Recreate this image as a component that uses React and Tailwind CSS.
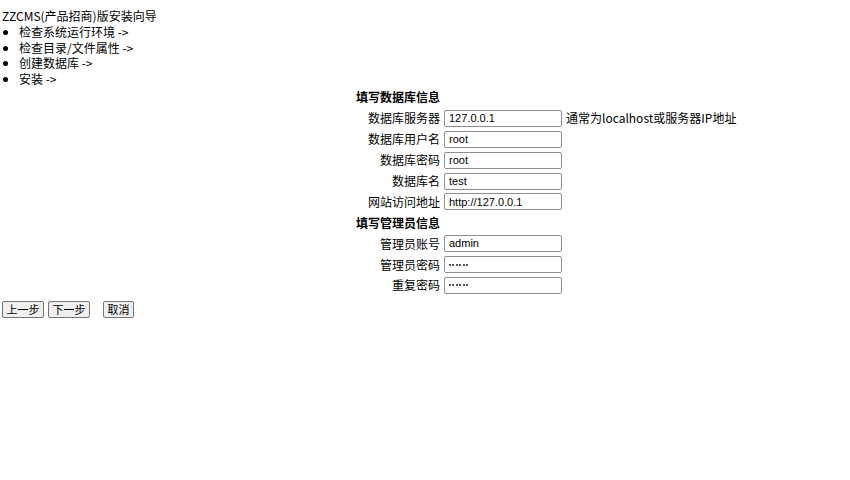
import React from 'react';

const dbRows = [
  { label: '数据库服务器', value: '127.0.0.1', tip: '通常为localhost或服务器IP地址' },
  { label: '数据库用户名', value: 'root' },
  { label: '数据库密码', value: 'root' },
  { label: '数据库名', value: 'test' },
  { label: '网站访问地址', value: 'http://127.0.0.1' },
];

const adminRows = [
  { label: '管理员账号', value: 'admin' },
  { label: '管理员密码', pwd: true },
  { label: '重复密码', pwd: true },
];

const steps = ['检查系统运行环境 ->', '检查目录/文件属性 ->', '创建数据库 ->', '安装 ->'];

const cjk = { fontFamily: '"Noto Sans CJK SC", "Liberation Sans", sans-serif' };

const Dots = () => (
  <span className="flex items-center gap-[1.4px]">
    {[0, 1, 2, 3, 4, 5].map((i) => (
      <span key={i} className="w-[2px] h-[2px] rounded-full bg-[#222]" />
    ))}
  </span>
);

const Row = ({ label, value, tip, pwd }) => (
  <div className="flex items-center h-[20.9px]">
    <div className="w-[84px] text-right text-[12px] leading-none">{label}</div>
    <div
      className="ml-[4px] w-[118px] h-[17px] border border-[#8f8f8f] rounded-[2px] bg-white flex items-center pl-[4px] text-[11px] text-black"
      style={{ fontFamily: '"Liberation Sans", Arial, sans-serif' }}
    >
      {pwd ? <Dots /> : value}
    </div>
    {tip && <div className="ml-[4px] text-[12px] leading-none whitespace-nowrap">{tip}</div>}
  </div>
);

const Btn = ({ children, className = '' }) => (
  <button className={`h-[17px] px-[3.5px] text-[11px] leading-none bg-[#efefef] border border-[#767676] rounded-[2px] text-black ${className}`}>
    {children}
  </button>
);

export default function App() {
  return (
    <div className="bg-white min-h-[480px] text-black pt-[8px] pl-[2px]" style={cjk}>
      <div className="text-[12px] leading-[16px]">ZZCMS(产品招商)版安装向导</div>
      <ul className="list-disc pl-[17px] text-[12px] leading-[15.5px]">
        {steps.map((s) => (
          <li key={s}>{s}</li>
        ))}
      </ul>

      <div className="pl-[354px] mt-[1px]">
        <div className="h-[20.9px] flex items-center font-bold text-[12px]">填写数据库信息</div>
        {dbRows.map((r) => (
          <Row key={r.label} {...r} />
        ))}
        <div className="h-[20.9px] flex items-center font-bold text-[12px]">填写管理员信息</div>
        {adminRows.map((r) => (
          <Row key={r.label} {...r} />
        ))}
      </div>

      <div className="mt-[5px] flex items-center">
        <Btn>上一步</Btn>
        <Btn className="ml-[4px]">下一步</Btn>
        <Btn className="ml-[13px]">取消</Btn>
      </div>
    </div>
  );
}
